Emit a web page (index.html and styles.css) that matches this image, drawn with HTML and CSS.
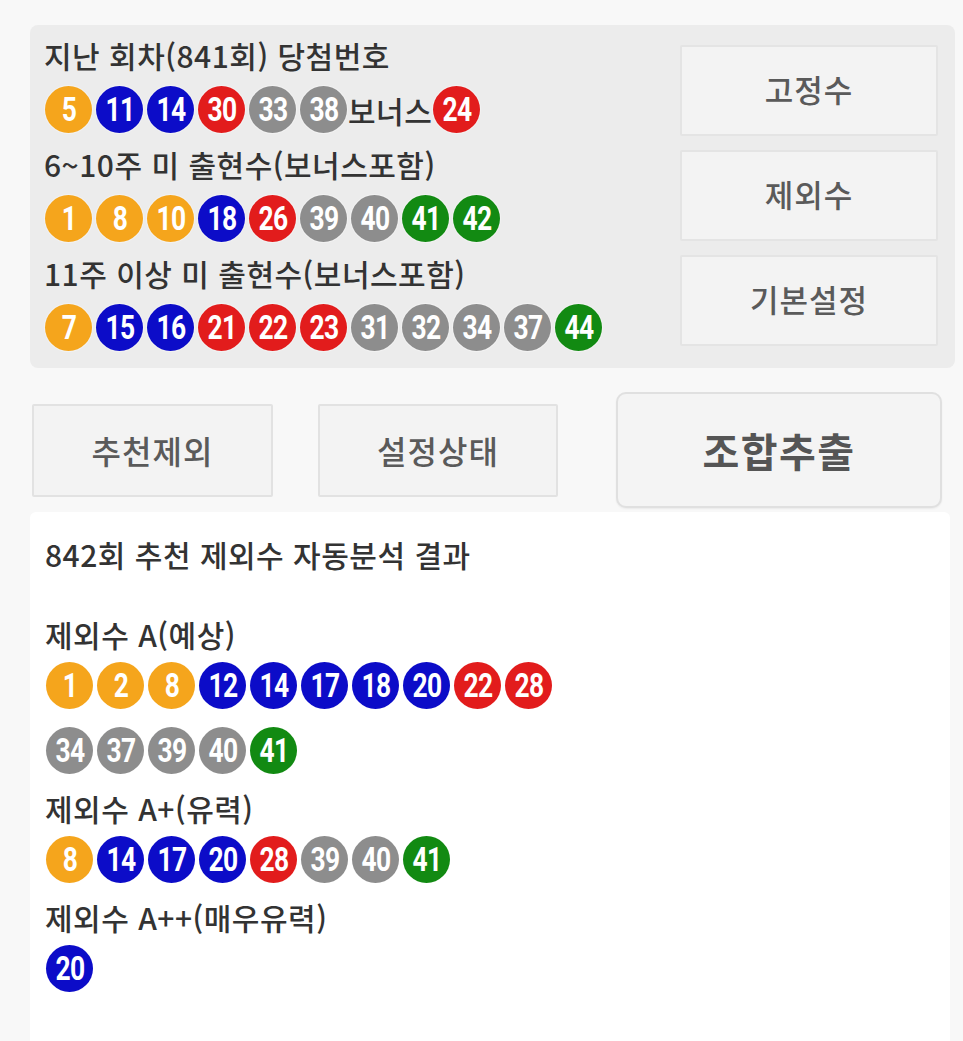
FILE: index.html
```html
<!DOCTYPE html>
<html lang="ko">
<head>
<meta charset="utf-8">
<title>로또 제외수</title>
<link rel="stylesheet" href="styles.css">
</head>
<body>
<div class="page">
  <section class="top">
    <div class="info">
      <div class="label">지난 회차(841회) 당첨번호</div>
      <div class="balls">
        <span class="ball y"><b>5</b></span><span class="ball b"><b>11</b></span><span class="ball b"><b>14</b></span><span class="ball r"><b>30</b></span><span class="ball g"><b>33</b></span><span class="ball g"><b>38</b></span><span class="bonus">보너스</span><span class="ball r"><b>24</b></span>
      </div>
      <div class="label">6~10주 미 출현수(보너스포함)</div>
      <div class="balls">
        <span class="ball y"><b>1</b></span><span class="ball y"><b>8</b></span><span class="ball y"><b>10</b></span><span class="ball b"><b>18</b></span><span class="ball r"><b>26</b></span><span class="ball g"><b>39</b></span><span class="ball g"><b>40</b></span><span class="ball n"><b>41</b></span><span class="ball n"><b>42</b></span>
      </div>
      <div class="label">11주 이상 미 출현수(보너스포함)</div>
      <div class="balls last">
        <span class="ball y"><b>7</b></span><span class="ball b"><b>15</b></span><span class="ball b"><b>16</b></span><span class="ball r"><b>21</b></span><span class="ball r"><b>22</b></span><span class="ball r"><b>23</b></span><span class="ball g"><b>31</b></span><span class="ball g"><b>32</b></span><span class="ball g"><b>34</b></span><span class="ball g"><b>37</b></span><span class="ball n"><b>44</b></span>
      </div>
    </div>
    <div class="side">
      <div class="side-btn">고정수</div>
      <div class="side-btn">제외수</div>
      <div class="side-btn">기본설정</div>
    </div>
  </section>

  <div class="actions">
    <div class="act-btn first">추천제외</div>
    <div class="act-btn second">설정상태</div>
    <div class="main-btn">조합추출</div>
  </div>

  <section class="result">
    <div class="label heading">842회 추천 제외수 자동분석 결과</div>
    <div class="label sub">제외수 A(예상)</div>
    <div class="balls res">
      <span class="ball y"><b>1</b></span><span class="ball y"><b>2</b></span><span class="ball y"><b>8</b></span><span class="ball b"><b>12</b></span><span class="ball b"><b>14</b></span><span class="ball b"><b>17</b></span><span class="ball b"><b>18</b></span><span class="ball b"><b>20</b></span><span class="ball r"><b>22</b></span><span class="ball r"><b>28</b></span>
    </div>
    <div class="balls res cont">
      <span class="ball g"><b>34</b></span><span class="ball g"><b>37</b></span><span class="ball g"><b>39</b></span><span class="ball g"><b>40</b></span><span class="ball n"><b>41</b></span>
    </div>
    <div class="label sub next">제외수 A+(유력)</div>
    <div class="balls res">
      <span class="ball y"><b>8</b></span><span class="ball b"><b>14</b></span><span class="ball b"><b>17</b></span><span class="ball b"><b>20</b></span><span class="ball r"><b>28</b></span><span class="ball g"><b>39</b></span><span class="ball g"><b>40</b></span><span class="ball n"><b>41</b></span>
    </div>
    <div class="label sub next">제외수 A++(매우유력)</div>
    <div class="balls res">
      <span class="ball b"><b>20</b></span>
    </div>
  </section>
</div>
</body>
</html>
```

FILE: styles.css
```css
html, body {
  margin: 0;
  padding: 0;
  background: #f8f8f8;
}

body {
  font-family: "Noto Sans CJK KR", "Noto Sans", sans-serif;
  color: #333;
}

.page {
  display: flex;
  flex-direction: column;
  padding-top: 25px;
}

/* ---------- top panel ---------- */
.top {
  display: flex;
  margin: 0 8px 0 30px;
  padding: 12px 17px 17px 14px;
  background: #ececec;
  border-radius: 8px;
}

.info {
  flex: 1;
  display: flex;
  flex-direction: column;
}

.label {
  font-size: 30px;
  line-height: 36px;
  height: 36px;
  font-weight: 500;
  letter-spacing: 0.5px;
  color: #333;
  white-space: nowrap;
}

.balls {
  display: flex;
  align-items: center;
  gap: 4px;
  height: 47px;
  margin: 13px 0;
  padding-left: 1px;
}

.balls.last {
  margin-bottom: 0;
}

.ball {
  flex: none;
  width: 47px;
  height: 47px;
  border-radius: 50%;
  display: flex;
  align-items: center;
  justify-content: center;
  box-shadow: 0 0 0 1px rgba(255, 255, 255, 0.35);
}

.ball b {
  display: inline-block;
  font-family: Roboto, "Liberation Sans", sans-serif;
  font-weight: 700;
  font-size: 33px;
  line-height: 1;
  color: #fff;
  letter-spacing: -1px;
  transform: scaleX(0.8);
}

.ball.y { background: #f5a51c; }
.ball.b { background: #0c0cc8; }
.ball.r { background: #e21c1c; }
.ball.g { background: #8d8d8d; }
.ball.n { background: #128a12; }

.bonus {
  font-size: 30px;
  line-height: 36px;
  font-weight: 500;
  letter-spacing: 0.5px;
  color: #333;
  margin: 0 -3px 0 -3px;
}

.side {
  width: 258px;
  display: flex;
  flex-direction: column;
  gap: 14px;
  margin-top: 8px;
}

.side-btn {
  height: 91px;
  box-sizing: border-box;
  background: #f3f3f3;
  border: 2px solid #e4e4e4;
  border-radius: 2px;
  display: flex;
  align-items: center;
  justify-content: center;
  font-size: 31px;
  font-weight: 500;
  letter-spacing: 1px;
  color: #5a5a5a;
  padding-bottom: 4px;
}

/* ---------- action row ---------- */
.actions {
  display: flex;
  align-items: center;
  height: 116px;
  margin-top: 24px;
  padding-left: 32px;
}

.act-btn {
  height: 93px;
  box-sizing: border-box;
  background: #f3f3f3;
  border: 2px solid #e2e2e2;
  border-radius: 2px;
  display: flex;
  align-items: center;
  justify-content: center;
  font-size: 32px;
  font-weight: 500;
  letter-spacing: 1px;
  color: #5a5a5a;
}

.act-btn.first { width: 241px; }
.act-btn.second { width: 240px; margin-left: 45px; }

.main-btn {
  width: 326px;
  height: 116px;
  box-sizing: border-box;
  margin-left: 58px;
  background: #f4f4f4;
  border: 2px solid #e0e0e0;
  border-radius: 10px;
  box-shadow: 0 1px 2px rgba(0, 0, 0, 0.06);
  display: flex;
  align-items: center;
  justify-content: center;
  font-size: 40px;
  font-weight: 700;
  letter-spacing: 1.5px;
  color: #555;
}

/* ---------- result ---------- */
.result {
  margin: 4px 13px 0 30px;
  padding: 24px 15px 80px 15px;
  background: #fff;
  border-radius: 6px 6px 0 0;
  display: flex;
  flex-direction: column;
}

.result .heading {
  margin-bottom: 44px;
}

.balls.res {
  margin: 10px 0 0 0;
}

.balls.res.cont {
  margin-top: 18px;
}

.label.next {
  margin-top: 16px;
}
```
